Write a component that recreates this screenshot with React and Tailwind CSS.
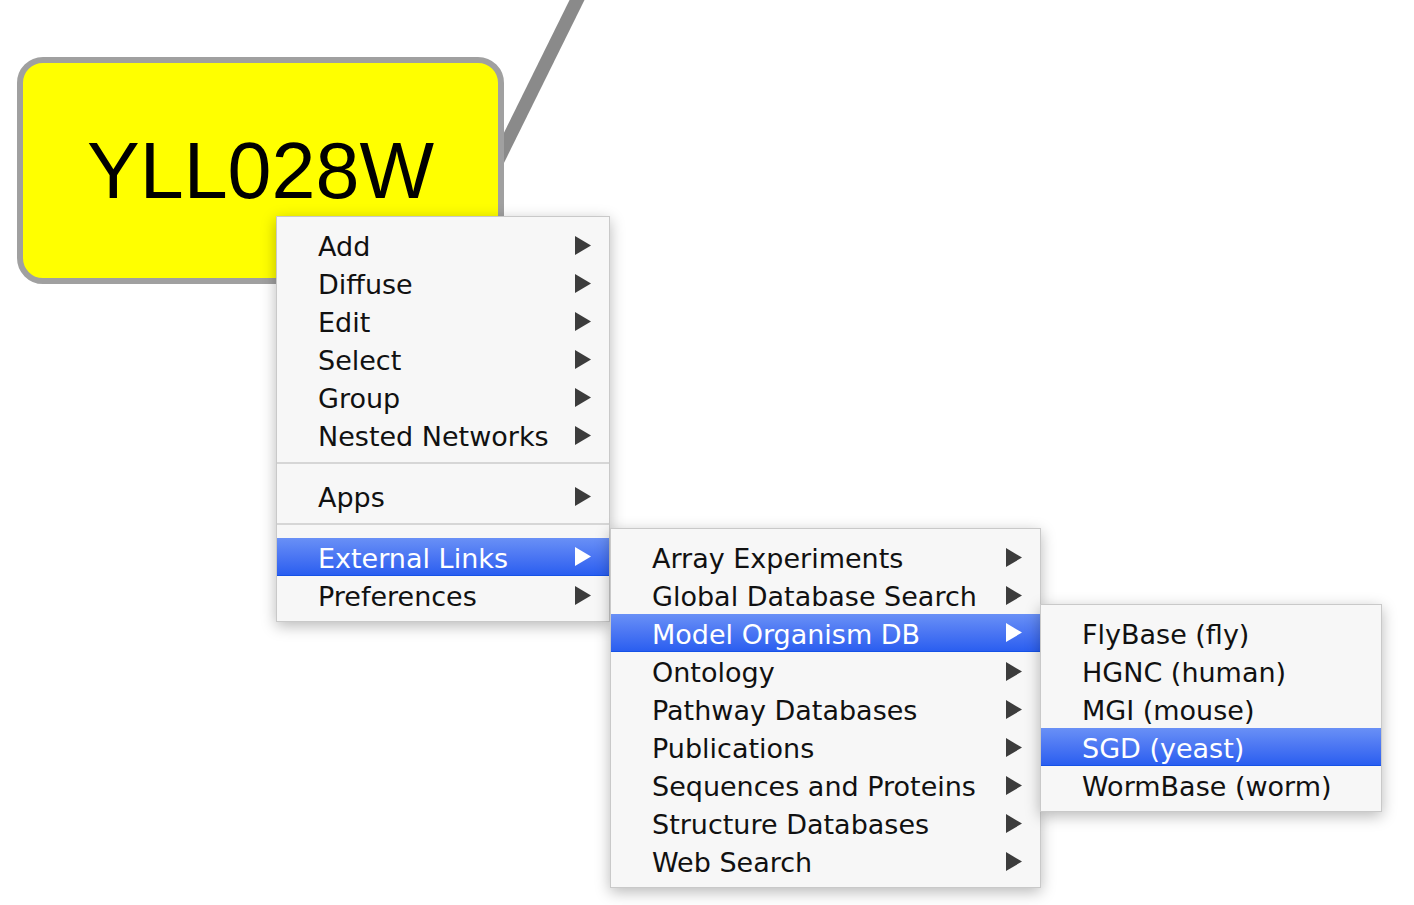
import React from "react";

const FONT = { fontFamily: '"DejaVu Sans", "Liberation Sans", sans-serif' };

function Arrow({ active }) {
  return (
    <svg width="16" height="19" viewBox="0 0 16 19" className="shrink-0">
      <polygon points="0,0 16,9.5 0,19" fill={active ? "#ffffff" : "#3c3c3c"} />
    </svg>
  );
}

function Item({ label, arrow = true, active = false }) {
  return (
    <div
      className={
        "flex h-[38px] items-center justify-between pl-[41px] pr-[18px] text-[27px] leading-[38px] " +
        (active
          ? "bg-gradient-to-b from-[#6990f6] via-[#4b76f3] to-[#2a5ef0] border-b border-[#1552e6] text-white"
          : "text-[#111111]")
      }
    >
      <span className="translate-y-[1.5px] whitespace-nowrap">{label}</span>
      {arrow ? <Arrow active={active} /> : null}
    </div>
  );
}

function Separator() {
  return (
    <div className="h-[23px] pt-[8px]">
      <div className="h-[2px] bg-[#d6d6d6]" />
    </div>
  );
}

const menuCls =
  "absolute bg-[#f7f7f7] border border-[#c9c9c9] pt-[9px] pb-[7px] shadow-[0_4px_14px_rgba(0,0,0,0.28)]";

export default function App() {
  return (
    <div className="relative h-[905px] w-[1414px] overflow-hidden bg-white" style={FONT}>
      {/* edge */}
      <svg className="absolute left-0 top-0" width="1414" height="905">
        <line x1="579" y1="-4" x2="495" y2="166" stroke="#8a8a8a" strokeWidth="13.4" />
      </svg>

      {/* node */}
      <div className="absolute left-[17px] top-[57px] flex h-[227px] w-[487px] items-center justify-center rounded-[26px] border-[6px] border-[#a0a0a0] bg-[#ffff00]">
        <span
          className="text-[79px] leading-none text-black"
          style={{ fontFamily: '"Liberation Sans", Arial, sans-serif' }}
        >
          YLL028W
        </span>
      </div>

      {/* menu 1 */}
      <div className={menuCls + " left-[276px] top-[216px] w-[334px]"}>
        <Item label="Add" />
        <Item label="Diffuse" />
        <Item label="Edit" />
        <Item label="Select" />
        <Item label="Group" />
        <Item label="Nested Networks" />
        <Separator />
        <Item label="Apps" />
        <Separator />
        <Item label="External Links" active />
        <Item label="Preferences" />
      </div>

      {/* menu 2 */}
      <div className={menuCls + " left-[610px] top-[528px] w-[431px]"}>
        <Item label="Array Experiments" />
        <Item label="Global Database Search" />
        <Item label="Model Organism DB" active />
        <Item label="Ontology" />
        <Item label="Pathway Databases" />
        <Item label="Publications" />
        <Item label="Sequences and Proteins" />
        <Item label="Structure Databases" />
        <Item label="Web Search" />
      </div>

      {/* menu 3 */}
      <div className={menuCls + " left-[1040px] top-[604px] w-[342px]"}>
        <Item label="FlyBase (fly)" arrow={false} />
        <Item label="HGNC (human)" arrow={false} />
        <Item label="MGI (mouse)" arrow={false} />
        <Item label="SGD (yeast)" arrow={false} active />
        <Item label="WormBase (worm)" arrow={false} />
      </div>
    </div>
  );
}
